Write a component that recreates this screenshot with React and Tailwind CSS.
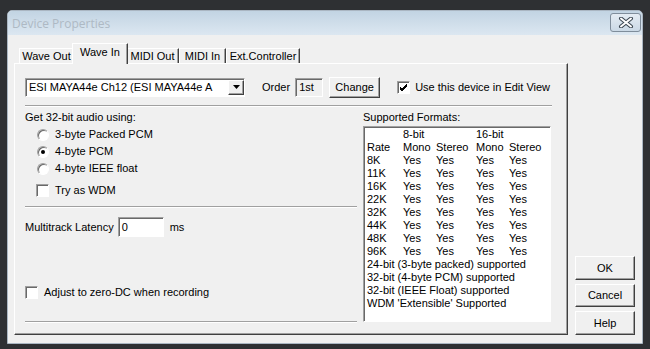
import React from 'react';

const raised =
  'border border-t-white border-l-white border-b-[#404040] border-r-[#404040] shadow-[inset_-1px_-1px_0_#a0a0a0] bg-[#f0f0f0]';
const sunken =
  'border border-t-[#a0a0a0] border-l-[#a0a0a0] border-b-white border-r-white shadow-[inset_1px_1px_0_#696969]';

const Radio = ({ checked }) => (
  <span className="relative flex h-[12px] w-[12px] items-center justify-center rounded-full border border-t-[#a0a0a0] border-l-[#a0a0a0] border-b-white border-r-white bg-white shadow-[inset_1px_1px_0_#696969]">
    {checked && <span className="h-[4px] w-[4px] rounded-full bg-black"></span>}
  </span>
);

const Check = ({ checked }) => (
  <span className={`flex h-[13px] w-[13px] items-center justify-center bg-white ${sunken}`}>
    {checked && (
      <svg width="9" height="9" viewBox="0 0 9 9">
        <path d="M1 4 L3 6 L8 1 M1 5 L3 7 L8 2 M1 6 L3 8 L8 3" stroke="#000" strokeWidth="1" fill="none" />
      </svg>
    )}
  </span>
);

const Tab = ({ label, active, w }) => (
  <div
    className={
      active
        ? 'relative z-10 -mx-[2px] -mb-px flex h-[21px] items-start justify-center border border-b-0 border-t-white border-l-white border-r-[#404040] bg-[#f0f0f0] pt-[2px] shadow-[inset_-1px_0_0_#a0a0a0]'
        : 'flex h-[15px] items-center justify-center border border-b-0 border-t-white border-l-white border-r-[#404040] shadow-[inset_-1px_0_0_#a0a0a0]'
    }
    style={{ width: w }}
  >
    {label}
  </div>
);

const rows = ['8K', '11K', '16K', '22K', '32K', '44K', '48K', '96K'];

export default function App() {
  return (
    <div className="h-[349px] w-[650px] overflow-hidden bg-[#2e3033] pl-[7px] pt-[10px] font-['Liberation_Sans',Arial,sans-serif] text-[11px] leading-[13px] text-black">
      <div className="flex h-[334px] w-[636px] flex-col rounded-t-[5px] border border-[#aab6c2] bg-[#f0f0f0]">
        {/* Title bar */}
        <div className="flex h-[24px] items-center justify-between rounded-t-[4px] bg-gradient-to-b from-[#c2d4e3] to-[#dce7f1] pl-[4px] pr-[1px]">
          <span className="font-['Open_Sans',sans-serif] text-[12px] text-[#aeb9c4]">Device Properties</span>
          <div className="mt-[-2px] flex h-[19px] w-[31px] items-center justify-center rounded-[3px] border border-[#7f8d9b] bg-gradient-to-b from-[#e4ecf3] to-[#cbd9e6]">
            <svg width="16" height="11" viewBox="0 0 16 11">
              <path d="M3 1.5 L13 9.5 M13 1.5 L3 9.5" stroke="#3c4752" strokeWidth="4" strokeLinecap="round" />
              <path d="M3 1.5 L13 9.5 M13 1.5 L3 9.5" stroke="#fff" strokeWidth="2" strokeLinecap="round" />
            </svg>
          </div>
        </div>

        {/* Body */}
        <div className="flex pl-[6px] pt-[8px]">
          <div className="flex w-[554px] flex-col">
            {/* Tabs */}
            <div className="flex h-[20px] items-end pl-[5px]">
              <Tab label="Wave Out" w={55} />
              <Tab label="Wave In" active w={56} />
              <Tab label="MIDI Out" w={53} />
              <Tab label="MIDI In" w={47} />
              <Tab label="Ext.Controller" w={74} />
            </div>

            {/* Panel */}
            <div className="h-[272px] border border-t-white border-l-white border-b-[#404040] border-r-[#404040] pl-[10px] pt-[13px] shadow-[inset_-1px_-1px_0_#a0a0a0]">
              <div className="flex h-[20px] items-center">
                <div className={`flex h-[19px] w-[220px] items-center justify-between bg-white pl-[3px] ${sunken}`}>
                  <span>ESI MAYA44e Ch12 (ESI MAYA44e A</span>
                  <span className={`flex h-[15px] w-[16px] items-center justify-center ${raised}`}>
                    <svg width="7" height="4" viewBox="0 0 7 4">
                      <path d="M0 0 H7 L3.5 4 Z" fill="#000" />
                    </svg>
                  </span>
                </div>
                <span className="ml-[17px]">Order</span>
                <div className={`ml-[5px] flex h-[19px] w-[28px] items-center bg-[#f0f0f0] pl-[3px] ${sunken}`}>1st</div>
                <button className={`ml-[6px] h-[21px] w-[51px] ${raised}`}>Change</button>
                <span className="ml-[17px]"><Check checked /></span>
                <span className="ml-[5px]">Use this device in Edit View</span>
              </div>

              <div className="mt-[8px] h-[2px] w-[527px] border-t border-b border-t-[#a0a0a0] border-b-white"></div>

              <div className="flex">
                {/* Left column */}
                <div className="flex w-[332px] flex-col">
                  <div className="mt-[4px] h-[13px]">Get 32-bit audio using:</div>
                  <div className="mt-[4px] flex flex-col gap-[4px] pl-[12px]">
                    {[['3-byte Packed PCM', false], ['4-byte PCM', true], ['4-byte IEEE float', false]].map(([t, c]) => (
                      <div key={t} className="flex h-[13px] items-center gap-[6px]">
                        <Radio checked={c} />
                        <span>{t}</span>
                      </div>
                    ))}
                  </div>
                  <div className="mt-[9px] flex h-[13px] items-center gap-[6px] pl-[11px]">
                    <Check />
                    <span>Try as WDM</span>
                  </div>
                  <div className="mt-[9px] h-[2px] w-[332px] border-t border-b border-t-[#a0a0a0] border-b-white"></div>
                  <div className="mt-[9px] flex h-[20px] items-center">
                    <span>Multitrack Latency</span>
                    <div className={`ml-[4px] flex h-[20px] w-[46px] items-center bg-white pl-[3px] ${sunken}`}>0</div>
                    <span className="ml-[6px]">ms</span>
                  </div>
                  <div className="mt-[49px] flex h-[13px] items-center gap-[6px]">
                    <Check />
                    <span>Adjust to zero-DC when recording</span>
                  </div>
                  <div className="mt-[22px] h-[2px] w-[332px] border-t border-b border-t-[#a0a0a0] border-b-white"></div>
                </div>

                {/* Right column */}
                <div className="ml-[6px] flex w-[188px] flex-col">
                  <div className="mt-[4px] h-[13px]">Supported Formats:</div>
                  <div className={`mt-[2px] h-[196px] bg-white pl-[3px] pt-[1px] ${sunken}`}>
                    <div className="grid grid-cols-[36px_33px_40px_33px_auto]">
                      <span></span><span>8-bit</span><span></span><span>16-bit</span><span></span>
                      <span>Rate</span><span>Mono</span><span>Stereo</span><span>Mono</span><span>Stereo</span>
                      {rows.map((r) => (
                        <React.Fragment key={r}>
                          <span>{r}</span><span>Yes</span><span>Yes</span><span>Yes</span><span>Yes</span>
                        </React.Fragment>
                      ))}
                    </div>
                    <div>24-bit (3-byte packed) supported</div>
                    <div>32-bit (4-byte PCM) supported</div>
                    <div>32-bit (IEEE Float) supported</div>
                    <div>WDM 'Extensible' Supported</div>
                  </div>
                </div>
              </div>
            </div>
          </div>

          {/* Buttons */}
          <div className="ml-[7px] flex flex-col justify-end gap-[4px]">
            <button className={`h-[24px] w-[60px] ${raised}`}>OK</button>
            <button className={`h-[23px] w-[60px] ${raised}`}>Cancel</button>
            <button className={`h-[24px] w-[60px] ${raised}`}>Help</button>
          </div>
        </div>
      </div>
    </div>
  );
}
